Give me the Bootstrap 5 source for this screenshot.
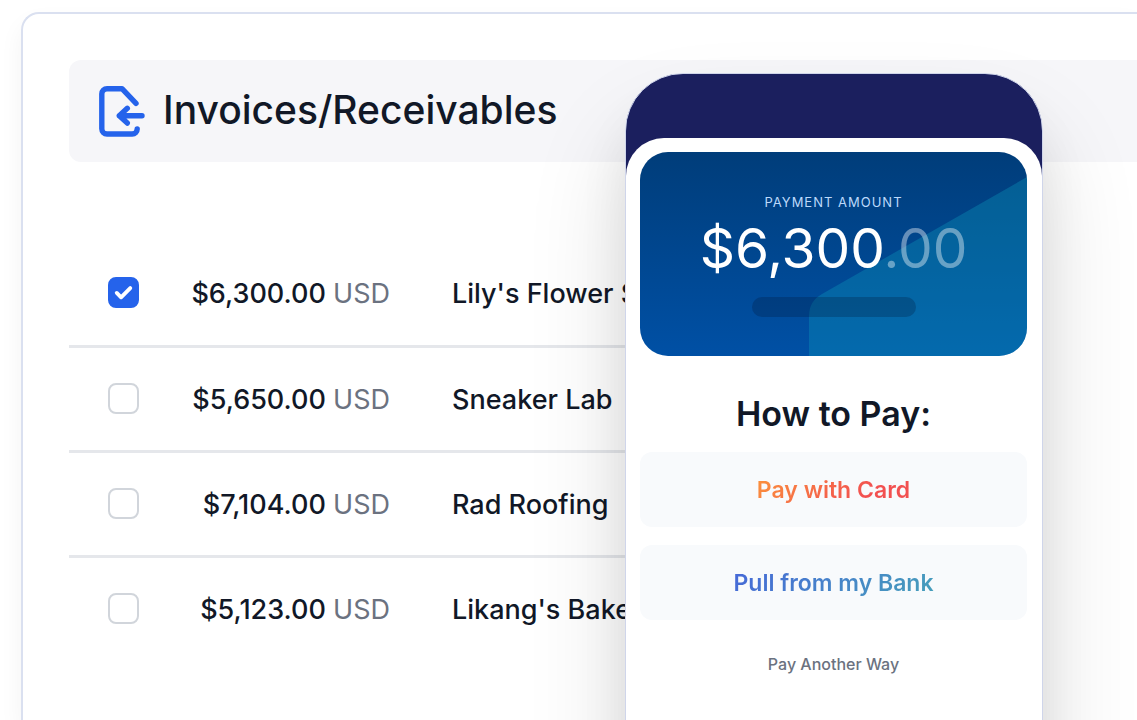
<!DOCTYPE html>
<html lang="en">
<head>
<meta charset="utf-8">
<meta name="viewport" content="width=device-width, initial-scale=1">
<title>Invoices/Receivables</title>
<link href="https://cdn.jsdelivr.net/npm/bootstrap@5.3.0/dist/css/bootstrap.min.css" rel="stylesheet">
<style>
  :root { --ink: #111827; --muted: #6b7280; --line: #e5e7eb; --edge: #dae0f0; --brand: #2563eb; }
  body { font-family: Inter, "Liberation Sans", sans-serif; color: var(--ink); background: #fff; }
  .stage { min-height: 100vh; padding: 12px 0 0 21px; }
  .panel { border: 2px solid var(--edge); border-width: 2px 0 0 2px; border-top-left-radius: 18px; padding: 46px 0 0 46px; background: #fff; box-shadow: 0 12px 24px rgba(0,0,0,.05); }
  .titlebar { height: 102px; padding: 0 28px; background: #f6f6f9; border-radius: 12px 0 0 12px; }
  .titlebar h1 { font-size: 39px; line-height: 48px; font-weight: 500; padding-bottom: 2px; }
  .ledger { margin-top: 79px; width: calc(100% - 200px); }
  .ledger td { height: 105px; padding: 2px 0 0; font-size: 27px; line-height: 36px; font-weight: 500; white-space: nowrap; border-bottom: 3px solid var(--line); vertical-align: middle; }
  .ledger tr:last-child td { border-bottom-color: transparent; }
  .ledger .col-tick { width: 70px; padding: 0 0 0 39px; }
  .ledger .col-amount { width: 251px; text-align: right; }
  .ledger .col-payer { padding-left: 62px; }
  .currency { color: var(--muted); font-weight: 400; }
  .tick { display: block; width: 31px; height: 31px; margin: 0; border: 2px solid #d1d5db; border-radius: 8px !important; }
  .tick:checked { background-color: var(--brand); border-color: var(--brand); background-size: 27px 27px; background-image: url("data:image/svg+xml,%3Csvg xmlns='http://www.w3.org/2000/svg' viewBox='0 0 28 28'%3E%3Cpath d='M7 14.500l4.500 4.500 9.500-9.500' fill='none' stroke='%23fff' stroke-width='4' stroke-linecap='round' stroke-linejoin='round'/%3E%3C/svg%3E"); }
  .phone { top: 73px; right: 94px; bottom: -80px; width: 418px; border: 1px solid #cfd5ea; border-radius: 58px; background: linear-gradient(#1b1f5e 120px, #fff 120px); box-shadow: 0 60px 100px rgba(0,0,0,.14), 0 40px 50px rgba(0,0,0,.07); }
  .sheet { margin-top: 64px; padding: 14px 15px 0 14px; border-radius: 38px 38px 0 0; background: #fff; min-height: calc(100% - 120px); }
  .amount-card { height: 204px; padding-top: 39px; border-radius: 28px; background: linear-gradient(#003d7a, #0050a5); color: #fff; }
  .facet { inset: 0; width: 100%; height: 100%; }
  .caption { font-size: 13px; line-height: 22px; color: #bcd9fb; letter-spacing: 1px; }
  .total { font-size: 55px; line-height: 70px; font-weight: 400; }
  .cents { opacity: .4; }
  .pill { width: 164px; height: 20px; margin-top: 14px; border-radius: 10px; background: rgba(0,20,50,.25); }
  .phone h2 { font-size: 34px; line-height: 44px; font-weight: 600; margin: 36px 0 16px; }
  .options { gap: 18px; }
  .pay { height: 75px; padding: 0; border: 0; border-radius: 12px; background: #f8fafc; font-size: 23px; line-height: 30px; font-weight: 600; }
  .pay span { background-clip: text; -webkit-background-clip: text; color: transparent; }
  .warm { background-image: linear-gradient(135deg, #fb923c, #f25050 70%); }
  .cool { background-image: linear-gradient(135deg, #4668d8, #469fba); }
  .other { margin-top: 32px; font-size: 16px; line-height: 24px; font-weight: 500; color: var(--muted); }
</style>
</head>
<body>
<div class="stage position-relative overflow-hidden d-flex flex-column">
  <main class="panel flex-grow-1">
    <header class="titlebar d-flex align-items-center">
      <svg width="50" height="54" viewBox="0 0 50 54" fill="none" stroke="#2563eb" stroke-width="5.400" stroke-linecap="round" stroke-linejoin="round" aria-hidden="true">
        <path d="M39 19.300 25 4.700H10a5.200 5.200 0 0 0-5.200 5.200V44.800A5.200 5.200 0 0 0 10 50h25.200a5 5 0 0 0 5-5"/>
        <path d="M45 31.700H22.300M30.300 24.300l-8 7.400 8 7.400"/>
      </svg>
      <h1 class="mb-0 ms-3">Invoices/Receivables</h1>
    </header>
    <table class="ledger">
      <tbody>
        <tr>
          <td class="col-tick"><input class="form-check-input tick" type="checkbox" aria-label="Lily's Flower Shop" checked></td>
          <td class="col-amount">$6,300.00 <span class="currency">USD</span></td>
          <td class="col-payer">Lily's Flower Shop</td>
        </tr>
        <tr>
          <td class="col-tick"><input class="form-check-input tick" type="checkbox" aria-label="Sneaker Lab"></td>
          <td class="col-amount">$5,650.00 <span class="currency">USD</span></td>
          <td class="col-payer">Sneaker Lab</td>
        </tr>
        <tr>
          <td class="col-tick"><input class="form-check-input tick" type="checkbox" aria-label="Rad Roofing"></td>
          <td class="col-amount">$7,104.00 <span class="currency">USD</span></td>
          <td class="col-payer">Rad Roofing</td>
        </tr>
        <tr>
          <td class="col-tick"><input class="form-check-input tick" type="checkbox" aria-label="Likang's Bakery"></td>
          <td class="col-amount">$5,123.00 <span class="currency">USD</span></td>
          <td class="col-payer">Likang's Bakery</td>
        </tr>
      </tbody>
    </table>
  </main>

  <aside class="phone position-absolute overflow-hidden">
    <div class="sheet text-center">
      <div class="amount-card position-relative overflow-hidden">
        <svg class="facet position-absolute" viewBox="0 0 387 204" preserveAspectRatio="none" aria-hidden="true">
          <path d="M387 25 182 142Q169 149 169 164V204H387Z" fill="rgb(12,154,190)" fill-opacity=".35"/>
        </svg>
        <div class="position-relative">
          <div class="caption">PAYMENT AMOUNT</div>
          <div class="total">$6,300<span class="cents">.00</span></div>
          <div class="pill mx-auto"></div>
        </div>
      </div>
      <h2>How to Pay:</h2>
      <div class="options d-grid">
        <button type="button" class="pay"><span class="warm">Pay with Card</span></button>
        <button type="button" class="pay"><span class="cool">Pull from my Bank</span></button>
      </div>
      <a href="#" class="other d-inline-block text-decoration-none">Pay Another Way</a>
    </div>
  </aside>
</div>
<script src="https://cdn.jsdelivr.net/npm/bootstrap@5.3.0/dist/js/bootstrap.bundle.min.js"></script>
</body>
</html>
